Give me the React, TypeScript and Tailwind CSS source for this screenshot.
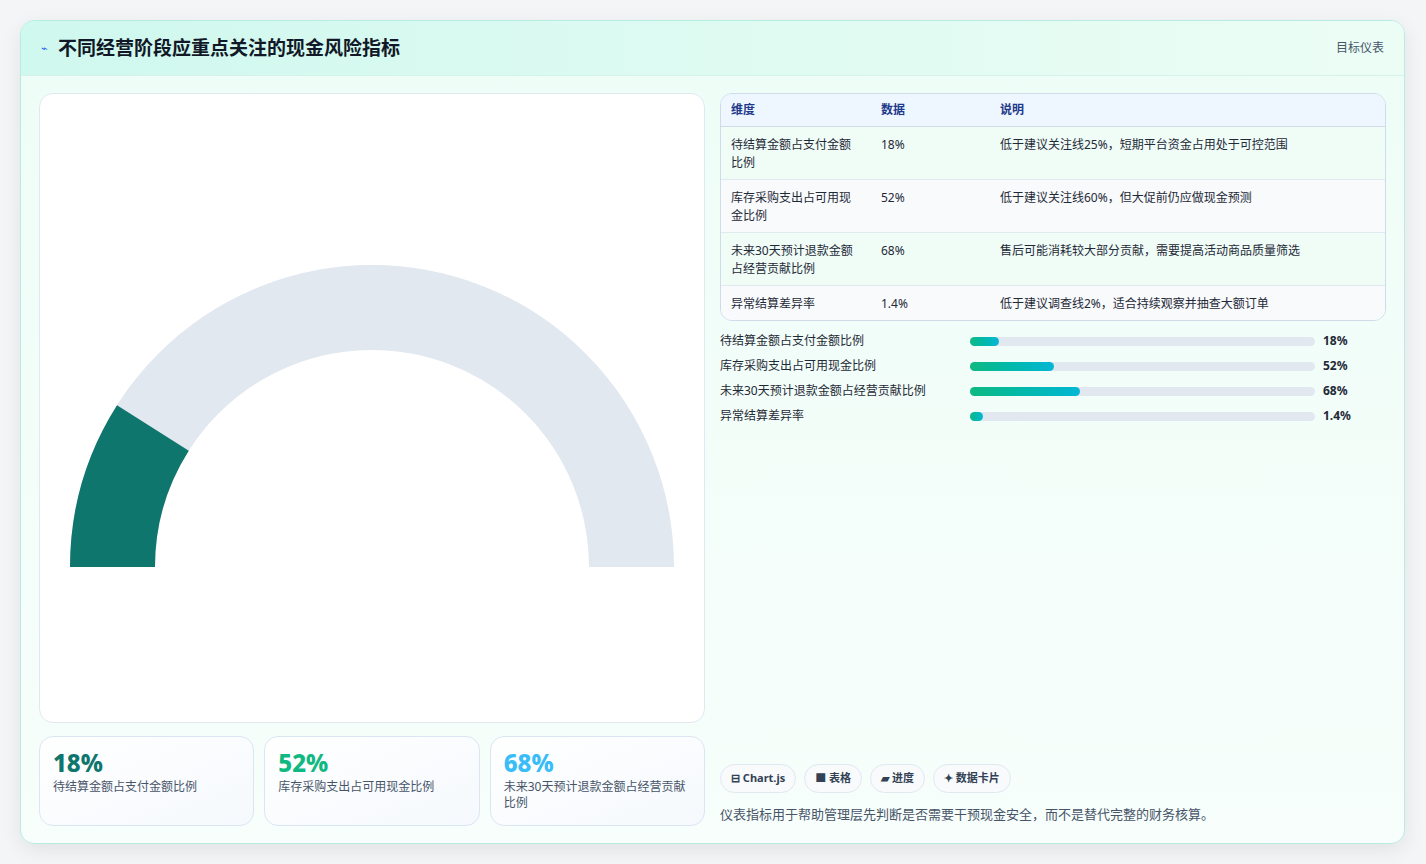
import React from "react";

const font = { fontFamily: '"Noto Sans", "Noto Sans CJK SC", sans-serif' };

const rows = [
  ["待结算金额占支付金额比例", "18%", "低于建议关注线25%，短期平台资金占用处于可控范围", "bg-[#f0fdf7]"],
  ["库存采购支出占可用现金比例", "52%", "低于建议关注线60%，但大促前仍应做现金预测", "bg-[#f8fafc]"],
  ["未来30天预计退款金额占经营贡献比例", "68%", "售后可能消耗较大部分贡献，需要提高活动商品质量筛选", "bg-[#f0fdf7]"],
  ["异常结算差异率", "1.4%", "低于建议调查线2%，适合持续观察并抽查大额订单", "bg-[#f8fafc]"],
];

const bars = [
  ["待结算金额占支付金额比例", "18%", 29],
  ["库存采购支出占可用现金比例", "52%", 84],
  ["未来30天预计退款金额占经营贡献比例", "68%", 110],
  ["异常结算差异率", "1.4%", 13],
];

export default function App() {
  return (
    <div style={font} className="w-[1426px] h-[864px] bg-[#f4f5f6] p-[20px] pb-[20px] box-border">
      <div className="w-[1385px] h-[824px] rounded-[14px] border border-[#b9ece0] bg-gradient-to-b from-[#eefdf7] to-[#f7fefb] shadow-[0_6px_20px_rgba(0,0,0,0.08)] overflow-hidden flex flex-col">
        <div className="h-[55px] shrink-0 flex items-center justify-between px-[20px] bg-gradient-to-r from-[#cff8ee] to-[#ecfdf5] border-b border-[#d5f3ea]">
          <div className="flex items-center gap-[10px]">
            <span className="text-[#2563eb] text-[11px]">⌁</span>
            <span className="text-[19px] font-bold text-[#111827]">不同经营阶段应重点关注的现金风险指标</span>
          </div>
          <span className="text-[12px] text-[#475569]">目标仪表</span>
        </div>
        <div className="flex-1 flex gap-[15px] px-[18px] pt-[17px] pb-[18px]">
          <div className="w-[666px] flex flex-col gap-[13px]">
            <div className="h-[630px] rounded-[14px] border border-[#e2e8f0] bg-white">
              <svg width="665" height="629" viewBox="0 0 665 629">
                <path d="M 72.5 473 A 259.5 259.5 0 0 1 591.5 473" fill="none" stroke="#e2e8f0" strokeWidth="85" />
                <path d="M 72.5 473 A 259.5 259.5 0 0 1 112.9 333.9" fill="none" stroke="#0f766e" strokeWidth="85" />
              </svg>
            </div>
            <div className="flex gap-[10px] h-[90px]">
              {[
                ["18%", "text-[#0f766e]", "待结算金额占支付金额比例"],
                ["52%", "text-[#10b981]", "库存采购支出占可用现金比例"],
                ["68%", "text-[#38bdf8]", "未来30天预计退款金额占经营贡献比例"],
              ].map(([v, c, l]) => (
                <div key={v} className="flex-1 rounded-[14px] border border-[#dbe6f3] bg-gradient-to-br from-white to-[#f5f9fd] px-[13px] pt-[10px]">
                  <div className={`text-[24px] font-extrabold leading-[32px] ${c}`}>{v}</div>
                  <div className="text-[12px] leading-[16px] text-[#475569]">{l}</div>
                </div>
              ))}
            </div>
          </div>
          <div className="flex-1 flex flex-col">
            <div className="rounded-[12px] border border-[#cfdbe9] overflow-hidden">
              <div className="flex h-[33px] items-center bg-[#eef6ff] border-b border-[#cfdbe9] text-[12px] font-bold text-[#1e3a8a]">
                <div className="w-[160px] pl-[10px]">维度</div>
                <div className="w-[119px]">数据</div>
                <div>说明</div>
              </div>
              {rows.map(([a, b, c, bg], i) => (
                <div key={i} className={`flex ${bg} ${i < 3 ? "border-b border-[#e2e8f0] h-[53px]" : "h-[34px]"} pt-[9px] text-[12px] leading-[18px] text-[#1f2937]`}>
                  <div className="w-[160px] pl-[10px] pr-[20px]">{a}</div>
                  <div className="w-[119px]">{b}</div>
                  <div>{c}</div>
                </div>
              ))}
            </div>
            <div className="flex flex-col gap-[7px] mt-[11px]">
              {bars.map(([l, v, w]) => (
                <div key={l as string} className="flex items-center h-[18px] text-[12px] text-[#1f2937]">
                  <div className="w-[250px]">{l}</div>
                  <div className="w-[345px] h-[9px] rounded-full bg-[#e2e8f0]">
                    <div className="h-[9px] rounded-full bg-gradient-to-r from-[#10b981] to-[#06b6d4]" style={{ width: w as number }} />
                  </div>
                  <div className="ml-[8px] font-bold">{v}</div>
                </div>
              ))}
            </div>
            <div className="flex-1" />
            <div className="flex gap-[8px] mb-[12px]">
              {["⊟ Chart.js", "■ 表格", "▰ 进度", "✦ 数据卡片"].map((t) => (
                <span key={t} className="h-[29px] px-[10px] flex items-center rounded-full border border-[#e2e8f0] bg-[#f8fafc] text-[11px] font-bold text-[#334155]">{t}</span>
              ))}
            </div>
            <div className="text-[13px] text-[#475569] mb-[2px]">仪表指标用于帮助管理层先判断是否需要干预现金安全，而不是替代完整的财务核算。</div>
          </div>
        </div>
      </div>
    </div>
  );
}
